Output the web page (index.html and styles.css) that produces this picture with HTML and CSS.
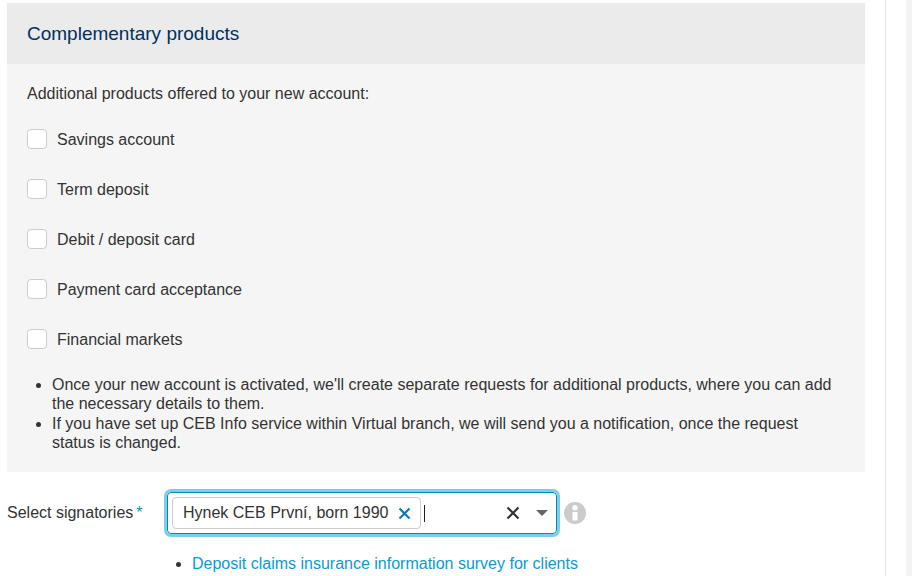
FILE: index.html
```html
<!DOCTYPE html>
<html lang="en">
<head>
<meta charset="utf-8">
<title>Complementary products</title>
<link rel="stylesheet" href="styles.css">
</head>
<body>
<div class="page">
  <main class="main">
    <section class="panel">
      <h2 class="panel-head">Complementary products</h2>
      <div class="panel-body">
        <p class="intro">Additional products offered to your new account:</p>
        <label class="check"><span class="box"></span>Savings account</label>
        <label class="check"><span class="box"></span>Term deposit</label>
        <label class="check"><span class="box"></span>Debit / deposit card</label>
        <label class="check"><span class="box"></span>Payment card acceptance</label>
        <label class="check"><span class="box"></span>Financial markets</label>
        <ul class="notes">
          <li>Once your new account is activated, we'll create separate requests for additional products, where you can add the necessary details to them.</li>
          <li>If you have set up CEB Info service within Virtual branch, we will send you a notification, once the request status is changed.</li>
        </ul>
      </div>
    </section>
    <div class="field">
      <span class="field-label">Select signatories<span class="req">*</span></span>
      <div class="select">
        <span class="tag"><span class="tag-text">Hynek CEB První, born 1990</span>
          <svg class="tag-x" width="13" height="13" viewBox="0 0 13 13"><path d="M1.500 1.500l10 10M11.500 1.500l-10 10"/></svg>
        </span>
        <span class="caret"></span>
        <svg class="clear-x" width="14" height="14" viewBox="0 0 14 14"><path d="M1.500 1.500l11 11M12.500 1.500l-11 11"/></svg>
        <span class="arrow"></span>
      </div>
      <svg class="info" width="22" height="22" viewBox="0 0 22 22"><circle cx="11" cy="11" r="11"/><circle class="info-mark" cx="11" cy="5.800" r="2.700"/><rect class="info-mark" x="8.500" y="10" width="5" height="8.500" rx="0.500"/></svg>
    </div>
    <ul class="links">
      <li><a href="#">Deposit claims insurance information survey for clients</a></li>
    </ul>
  </main>
  <div class="gutter"></div>
  <div class="scrollbar"></div>
</div>
</body>
</html>
```
FILE: styles.css
```css
html, body {
  margin: 0;
  height: 100%;
  overflow: hidden;
  background: #fff;
}
body {
  font-family: "Liberation Sans", Arial, sans-serif;
  font-size: 16px;
  line-height: 19px;
  color: #333;
}
.page {
  display: flex;
  height: 576px;
}
.main {
  width: 858px;
  padding: 3px 20px 0 7px;
  flex: none;
}
.gutter {
  flex: 1;
  border-left: 1px solid #e4e4e4;
}
.scrollbar {
  width: 6px;
  flex: none;
  background: #f3f3f3;
}
.panel {
  background: #f5f5f5;
}
.panel-head {
  margin: 0;
  height: 61px;
  padding-left: 20px;
  background: #ebebeb;
  color: #00305e;
  font-size: 19px;
  font-weight: 400;
  line-height: 61px;
}
.panel-body {
  padding: 20px 20px 20px;
}
.intro {
  margin: 0 0 26px;
}
.check {
  display: flex;
  align-items: center;
  gap: 10px;
  height: 20px;
  margin-bottom: 30px;
}
.box {
  width: 18px;
  height: 18px;
  background: #fff;
  border: 1px solid #ccc;
  border-radius: 4px;
}
.notes {
  margin: -4px 0 0;
  padding-left: 25px;
}
.notes li + li {
  margin-top: 1px;
}
.field {
  display: flex;
  align-items: center;
  margin-top: 20px;
  height: 42px;
}
.field-label {
  width: 160px;
  flex: none;
  padding-bottom: 2px;
}
.req {
  margin-left: 3px;
  color: #0a94c8;
}
.select {
  box-sizing: border-box;
  width: 390px;
  height: 42px;
  display: flex;
  align-items: center;
  padding-left: 4px;
  border: 1px solid #0086b8;
  border-radius: 4px;
  outline: 3px solid #7cceea;
  background: #fff;
}
.tag {
  box-sizing: border-box;
  display: flex;
  align-items: center;
  gap: 10px;
  width: 249px;
  height: 32px;
  padding: 0 8px 0 10px;
  border: 1px solid #ccc;
  border-radius: 4px;
  white-space: nowrap;
}
.tag-text {
  padding-bottom: 2px;
}
.tag-x {
  fill: none;
  stroke: #0a7db0;
  stroke-width: 2.2;
  flex: none;
}
.caret {
  width: 1px;
  height: 17px;
  margin-left: 3px;
  background: #222;
}
.clear-x {
  margin-left: auto;
  fill: none;
  stroke: #333;
  stroke-width: 2.2;
}
.arrow {
  width: 0;
  height: 0;
  margin: 0 8px 0 16px;
  border-left: 6px solid transparent;
  border-right: 6px solid transparent;
  border-top: 6px solid #666;
}
.info {
  margin-left: 7px;
  fill: #cbcbcb;
}
.info-mark {
  fill: #fff;
}
.links {
  margin: 20px 0 0;
  padding-left: 185px;
}
.links a {
  color: #0a9ad4;
  text-decoration: none;
}
```
